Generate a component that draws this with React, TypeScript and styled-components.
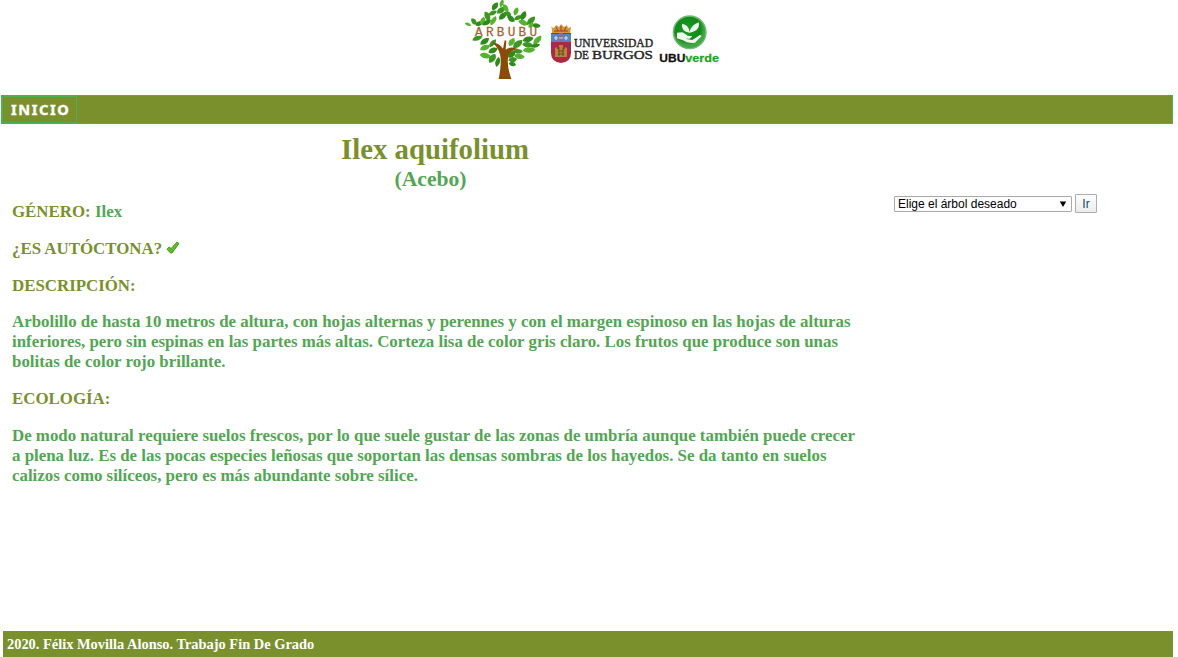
import React from 'react';
import styled, { createGlobalStyle } from 'styled-components';

const OLIVE = '#7a902d';
const GREEN = '#53a653';

const GlobalStyle = createGlobalStyle`
  * { box-sizing: border-box; }
  body {
    margin: 0;
    background: #fff;
    font-family: "Liberation Serif", "Times New Roman", serif;
    overflow: hidden;
  }
`;

const Page = styled.div`
  display: flex;
  flex-direction: column;
  height: 657px;
  width: 1178px;
`;

const Header = styled.header`
  display: flex;
  height: 95px;
  flex: none;
  padding-left: 460px;
`;

const Logo = styled.svg<{ $top?: number }>`
  display: block;
  flex: none;
  margin-top: ${({ $top = 0 }) => $top}px;
  overflow: visible;
`;

const NavBar = styled.nav`
  display: flex;
  flex: none;
  height: 29px;
  margin: 0 5px 0 1px;
  background: ${OLIVE};
  border: 1px solid #4caf50;
`;

const NavLink = styled.a`
  display: flex;
  align-items: center;
  width: 75px;
  padding: 0 0 2px 8px;
  border: 1px solid #4caf50;
  color: #fff;
  font: bold 14.6px "Noto Sans", Verdana, sans-serif;
  letter-spacing: 1.6px;
  -webkit-text-stroke: 0.4px #fff;
  text-decoration: none;
`;

const Content = styled.main`
  display: flex;
  flex: 1;
  min-height: 0;
`;

const Article = styled.article`
  width: 846px;
  margin-left: 12px;
  color: ${GREEN};
  font-size: 16.86px;
  font-weight: bold;
  line-height: 20px;
`;

const Title = styled.h1`
  margin: 9px 0 0;
  color: ${OLIVE};
  font-size: 28.8px;
  line-height: 32px;
  text-align: center;
`;

const Subtitle = styled.h2`
  margin: 1px 9px 0 0;
  font-size: 21.6px;
  line-height: 26px;
  text-align: center;
`;

const Paragraph = styled.p<{ $top?: number }>`
  margin: ${({ $top = 17 }) => $top}px 0 0;
  white-space: nowrap;
`;

const Label = styled.span`
  color: ${OLIVE};
`;

const Chooser = styled.form`
  display: flex;
  align-items: center;
  gap: 3px;
  height: 20px;
  margin: 70px 0 0 36px;
  font: 12px "Liberation Sans", Arial, sans-serif;
`;

const Select = styled.div`
  display: flex;
  align-items: center;
  justify-content: space-between;
  width: 178px;
  height: 16px;
  padding: 0 4px 0 3px;
  border: 1px solid #a9a9a9;
  border-radius: 1px;
  color: #000;
`;

const Button = styled.button`
  width: 22px;
  height: 19px;
  margin-bottom: 1px;
  padding: 0;
  border: 1px solid #adadad;
  border-radius: 1px;
  background: linear-gradient(#fcfcfc, #ededed);
  color: #0b4a6b;
  font: inherit;
`;

const Footer = styled.footer`
  flex: none;
  height: 26px;
  margin: 0 5px 0 3px;
  padding-left: 4px;
  background: ${OLIVE};
  color: #fff;
  font-size: 14.42px;
  font-weight: bold;
  line-height: 27px;
`;

type Leaf = [number, number, number, number, number];

/* centre x, centre y, half length, half width, rotation */
const leaves: Leaf[] = [
  [24, 73, 10, 4, 25], [42, 65, 12, 6, 55], [57, 71, 11, 6, -20], [68, 63, 13, 6, -65],
  [82, 49, 16, 7, 70], [80, 68, 15, 6, -25], [100, 62, 16, 6, -55], [98, 39, 14, 6, -20],
  [105, 19, 14, 7, -50], [125, 10, 13, 5, -70], [123, 31, 15, 7, -30], [128, 48, 15, 7, -40],
  [137, 24, 14, 6, 60], [143, 41, 12, 6, 30], [153, 56, 14, 7, 45], [168, 34, 13, 6, -65],
  [174, 53, 13, 6, -20], [190, 47, 15, 7, -60], [190, 68, 16, 7, 25], [213, 62, 17, 7, -40],
  [229, 77, 13, 6, 10], [213, 76, 10, 5, -30],
  [52, 115, 16, 6, -15], [74, 124, 16, 7, -30], [75, 143, 16, 7, -15], [98, 130, 15, 6, -45],
  [99, 151, 15, 7, -20], [76, 167, 17, 7, 15], [97, 175, 16, 8, -50], [113, 186, 15, 6, -70],
  [155, 126, 14, 7, -50], [173, 132, 18, 8, -35], [204, 118, 17, 7, -10], [232, 121, 18, 7, -45],
  [203, 134, 16, 7, 10], [226, 137, 15, 5, -10], [207, 150, 19, 7, 0], [174, 154, 14, 6, 5],
  [155, 163, 14, 7, -35], [178, 169, 16, 7, 15], [158, 179, 13, 7, 0], [157, 192, 11, 6, 20],
];

const TreeLogo = () => (
  <Logo width="90" height="84" viewBox="0 0 270 252">
    {leaves.map(([x, y, l, w, r], i) => (
      <path
        key={i}
        d={`M${-l} ${w * 0.3}C${-l * 0.6} ${-w * 1.5} ${l * 0.3} ${-w * 1.5} ${l} ${-w * 0.3}C${l * 0.6} ${w * 1.5} ${-l * 0.3} ${w * 1.5} ${-l} ${w * 0.3}Z`}
        fill={i % 3 === 1 ? '#3c9622' : i % 3 === 2 ? '#2f8a1c' : '#57b32f'}
        transform={`translate(${x} ${y}) rotate(${r})`}
      />
    ))}
    <path
      d="M96 127Q119 130 129 146L134 121L139 122L137 149Q151 137 175 147Q149 152 145 168Q139 195 154 237H116Q126 187 120 163Q115 143 96 127Z"
      fill="#8a4b08"
    />
    <text x="45" y="108" fill="#a5642f" stroke="#a5642f" strokeWidth="0.8" fontFamily="Liberation Mono, monospace" fontSize="38" textLength="186">ARBUBU</text>
  </Logo>
);

const UniversityLogo = () => (
  <Logo width="105" height="46" viewBox="0 0 105 46" $top={20}>
    <path d="M2 9L1 7L4 8L6 5L9 7L11 4L14 7L17 5L18 8L21 7L20 14H2Z" fill="#d39a3c" />
    <path d="M4 11H18M6 7L8 11M16 7L14 11M11 6V11" stroke="#a23a30" strokeWidth="1" />
    <path d="M1 13H21V33Q21 42 11 43Q1 42 1 33Z" fill="#a92b43" />
    <path d="M1 14H21V22H1Z" fill="#5a80c6" />
    <path d="M9 13H13V22H9Z" fill="#7f6fa4" />
    <path d="M4 18H8M6 16V20M14 18H18M16 16V20M9 18H13" stroke="#e4dcc5" strokeWidth="1.2" />
    <path d="M5 37V28L7 27V29H9V25H13V29H15V27L17 28V37Z" fill="#b6853b" />
    <path d="M8 31H14M8 34H14M9 27V36M13 28V36" stroke="#654225" strokeWidth="0.9" />
    <g fill="#262626" stroke="#262626" strokeWidth="0.4" fontFamily="Liberation Serif, serif">
      <text x="24" y="27.3" fontSize="12" textLength="79" lengthAdjust="spacingAndGlyphs">UNIVERSIDAD</text>
      <text x="24" y="38.6" fontSize="12" textLength="15" lengthAdjust="spacingAndGlyphs">DE</text>
      <text x="42" y="38.6" fontSize="13" textLength="61" lengthAdjust="spacingAndGlyphs">BURGOS</text>
    </g>
  </Logo>
);

const VerdeLogo = () => (
  <Logo width="70" height="60" viewBox="0 0 210 180" $top={10}>
    <defs>
      <radialGradient id="verde" cx="45%" cy="40%">
        <stop offset="0" stopColor="#189d22" />
        <stop offset="0.75" stopColor="#138a1b" />
        <stop offset="1" stopColor="#43a647" />
      </radialGradient>
    </defs>
    <circle cx="104" cy="67" r="49" fill="url(#verde)" stroke="#73bd74" strokeWidth="4" />
    <path d="M104 68Q78 64 81 41Q101 44 104 66Q107 46 131 37Q137 62 104 68Z" fill="#eef8ec" />
    <path d="M66 68L82 67Q90 71 98 77L112 79L104 86H90L112 90L135 75L140 78L120 98Q97 101 84 91L66 85Z" fill="#eef8ec" />
    <g fontFamily="Liberation Sans, Arial, sans-serif" fontWeight="bold" fontSize="34" strokeWidth="0.8">
      <text x="13" y="155" fill="#111" stroke="#111" textLength="78" lengthAdjust="spacingAndGlyphs">UBU</text>
      <text x="91" y="155" fill="#17a622" stroke="#17a622" textLength="101" lengthAdjust="spacingAndGlyphs">verde</text>
    </g>
  </Logo>
);

const Check = styled.svg`
  display: inline-block;
  vertical-align: -1px;
`;

const App = () => (
  <Page>
    <GlobalStyle />
    <Header>
      <TreeLogo />
      <UniversityLogo />
      <VerdeLogo />
    </Header>
    <NavBar>
      <NavLink>INICIO</NavLink>
    </NavBar>
    <Content>
      <Article>
        <Title>Ilex aquifolium</Title>
        <Subtitle>(Acebo)</Subtitle>
        <Paragraph $top={10}><Label>GÉNERO:</Label> Ilex</Paragraph>
        <Paragraph>
          <Label>¿ES AUTÓCTONA?</Label>{' '}
          <Check width="14" height="14" viewBox="0 0 14 14">
            <path d="M1 8.2L3.2 6L5.2 7.6L10.8 1.2L13 2.5L6 12H4.5Z" fill="#63b92c" stroke="#459a1c" strokeWidth="1" />
          </Check>
        </Paragraph>
        <Paragraph><Label>DESCRIPCIÓN:</Label></Paragraph>
        <Paragraph $top={16}>
          Arbolillo de hasta 10 metros de altura, con hojas alternas y perennes y con el margen espinoso en las hojas de alturas<br />
          inferiores, pero sin espinas en las partes más altas. Corteza lisa de color gris claro. Los frutos que produce son unas<br />
          bolitas de color rojo brillante.
        </Paragraph>
        <Paragraph><Label>ECOLOGÍA:</Label></Paragraph>
        <Paragraph>
          De modo natural requiere suelos frescos, por lo que suele gustar de las zonas de umbría aunque también puede crecer<br />
          a plena luz. Es de las pocas especies leñosas que soportan las densas sombras de los hayedos. Se da tanto en suelos<br />
          calizos como silíceos, pero es más abundante sobre sílice.
        </Paragraph>
      </Article>
      <Chooser>
        <Select>
          <span>Elige el árbol deseado</span>
          <svg width="8" height="7" viewBox="0 0 8 7"><path d="M0.8 0.5H7.2L4 6Z" /></svg>
        </Select>
        <Button type="button">Ir</Button>
      </Chooser>
    </Content>
    <Footer>2020. Félix Movilla Alonso. Trabajo Fin De Grado</Footer>
  </Page>
);

export default App;
